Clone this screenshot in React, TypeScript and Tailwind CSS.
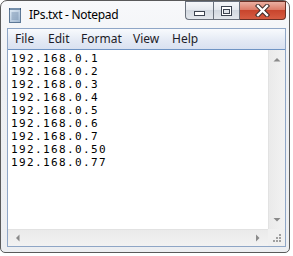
const ips = [
  '192.168.0.1',
  '192.168.0.2',
  '192.168.0.3',
  '192.168.0.4',
  '192.168.0.5',
  '192.168.0.6',
  '192.168.0.7',
  '192.168.0.50',
  '192.168.0.77',
]

const menu = [
  { label: 'File', w: 'w-[33px]' },
  { label: 'Edit', w: 'w-[33px]' },
  { label: 'Format', w: 'w-[52px]' },
  { label: 'View', w: 'w-[39px]' },
  { label: 'Help', w: 'w-[30px]' },
]

function NotepadIcon() {
  return (
    <svg width="16" height="16" viewBox="0 0 16 16">
      <defs>
        <linearGradient id="pg" x1="0" y1="0" x2="1" y2="1">
          <stop offset="0" stopColor="#dfeaf5" />
          <stop offset="1" stopColor="#9fb6cf" />
        </linearGradient>
      </defs>
      <rect x="2.5" y="2.5" width="11" height="13" fill="url(#pg)" stroke="#5d7896" />
      <rect x="2" y="1" width="12" height="2" fill="#3f5f82" />
      <path d="M4 1v2M6 1v2M8 1v2M10 1v2M12 1v2" stroke="#c9d8e8" strokeWidth="0.8" />
      <path d="M4.5 6h7M4.5 8h7M4.5 10h7M4.5 12h7" stroke="#6b87a6" strokeWidth="0.8" />
    </svg>
  )
}

function Tri({ dir }: { dir: 'up' | 'down' | 'left' | 'right' }) {
  const d = {
    up: 'M0.5 4.5 L4 1 L7.5 4.5 Z',
    down: 'M0.5 1 L4 4.5 L7.5 1 Z',
    left: 'M4.5 0.5 L1 4 L4.5 7.5 Z',
    right: 'M1 0.5 L4.5 4 L1 7.5 Z',
  }[dir]
  const box = dir === 'up' || dir === 'down' ? { w: 8, h: 6 } : { w: 6, h: 8 }
  return (
    <svg width={box.w} height={box.h} viewBox={`0 0 ${box.w} ${box.h}`}>
      <path d={d} fill="#8a8a8a" />
    </svg>
  )
}

export default function App() {
  return (
    <div className="h-[256px] w-[293px] bg-white">
      <div
        className="flex h-[253px] w-[290px] flex-col rounded-t-[7px] rounded-b-[5px] border border-[#5a5a5a] bg-[linear-gradient(#f8f9fb,#eef0f3_30%,#eceef1)]"
        style={{ fontFamily: '"Noto Sans", "Open Sans", sans-serif' }}
      >
        {/* Title bar */}
        <div className="flex h-[27px] items-start justify-between">
          <div className="flex items-center gap-[6px] pl-[6px] pt-[6px]">
            <NotepadIcon />
            <span className="text-[12px] leading-[16px] tracking-[-0.3px] text-black">IPs.txt - Notepad</span>
          </div>
          <div className="mr-[3px] flex">
            <div className="flex h-[19px] w-[28px] items-end justify-center rounded-bl-[4px] border border-r-0 border-[#6a717c] bg-[linear-gradient(#f6f7f9,#e6e9ee_45%,#d2d8e0_50%,#e3e7ec)] pb-[3px]">
              <svg width="11" height="5" viewBox="0 0 11 5">
                <rect x="0.5" y="0.5" width="10" height="4" fill="#ffffff" stroke="#3d4450" />
              </svg>
            </div>
            <div className="flex h-[19px] w-[27px] items-center justify-center border border-[#6a717c] bg-[linear-gradient(#f6f7f9,#e6e9ee_45%,#d2d8e0_50%,#e3e7ec)]">
              <svg width="11" height="10" viewBox="0 0 11 10">
                <rect x="0.5" y="0.5" width="10" height="9" fill="#ffffff" stroke="#3d4450" />
                <rect x="2.5" y="3.5" width="6" height="4" fill="#dfe3e9" stroke="#3d4450" />
              </svg>
            </div>
            <div className="flex h-[19px] w-[46px] items-center justify-center rounded-br-[4px] border border-l-0 border-[#6b3026] bg-[linear-gradient(#eab0a2,#dc7d69_45%,#c8452d_50%,#d65c42)]">
              <svg width="15" height="13" viewBox="0 0 15 13">
                <path d="M3 2 L12 11 M12 2 L3 11" stroke="#3b2a28" strokeWidth="4.4" strokeLinecap="square" />
                <path d="M3 2 L12 11 M12 2 L3 11" stroke="#ffffff" strokeWidth="2.4" strokeLinecap="square" />
              </svg>
            </div>
          </div>
        </div>

        {/* Client */}
        <div className="ml-[6px] mr-[3px] flex h-[219px] flex-col border border-[#8fa6c6]">
          <div className="flex h-[21px] items-center border-b border-[#6f94c4] bg-[linear-gradient(#f8fafd,#e3e9f4_60%,#d9e1f0)] pl-[7px] text-[12px] text-[#1c1c28]">
            {menu.map((m) => (
              <span key={m.label} className={m.w}>
                {m.label}
              </span>
            ))}
          </div>
          <div className="grid flex-1 grid-cols-[1fr_17px] grid-rows-[1fr_17px] bg-white">
            <div
              className="pl-[3px] pt-[2px] text-[11px] leading-[13px] tracking-[1.38px] text-black"
              style={{ fontFamily: '"DejaVu Sans Mono", "Liberation Mono", monospace' }}
            >
              {ips.map((ip) => (
                <div key={ip}>{ip}</div>
              ))}
            </div>
            {/* vertical scrollbar */}
            <div className="flex flex-col items-center justify-between border-l border-[#e2e2e2] bg-[linear-gradient(90deg,#eaeaea,#f2f2f2)] pb-[6px] pt-[7px]">
              <Tri dir="up" />
              <Tri dir="down" />
            </div>
            {/* horizontal scrollbar */}
            <div className="flex items-center justify-between border-t border-[#e2e2e2] bg-[linear-gradient(#eaeaea,#f2f2f2)] pl-[7px] pr-[7px]">
              <Tri dir="left" />
              <Tri dir="right" />
            </div>
            {/* size grip */}
            <div className="flex items-end justify-end bg-[#f0f0f0] pb-[3px] pr-[3px]">
              <svg width="9" height="9" viewBox="0 0 9 9">
                <rect x="6" y="0" width="2" height="2" fill="#a0a0a0" />
                <rect x="3" y="3" width="2" height="2" fill="#a0a0a0" />
                <rect x="6" y="3" width="2" height="2" fill="#a0a0a0" />
                <rect x="0" y="6" width="2" height="2" fill="#a0a0a0" />
                <rect x="3" y="6" width="2" height="2" fill="#a0a0a0" />
                <rect x="6" y="6" width="2" height="2" fill="#a0a0a0" />
              </svg>
            </div>
          </div>
        </div>
      </div>
    </div>
  )
}
